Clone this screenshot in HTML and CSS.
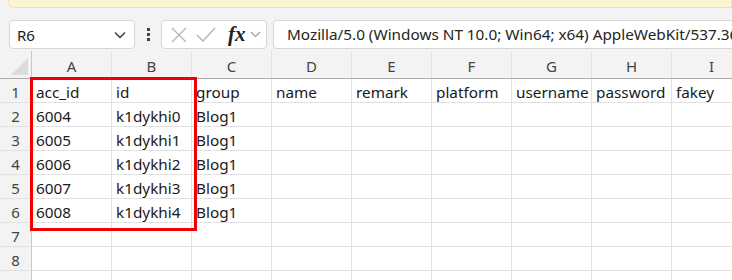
FILE: index.html
```html
<!DOCTYPE html>
<html lang="en">
<head>
  <meta charset="UTF-8">
  <title>Sheet</title>
  <link rel="stylesheet" href="styles.css">
</head>
<body>
  <div class="notice"></div>
  <div class="formula-bar">
    <div class="name-box">
      <span>R6</span>
      <svg class="chev" width="12" height="8" viewBox="0 0 12 8"><path d="M1 1.5 L6 6.5 L11 1.5" fill="none" stroke="#333" stroke-width="1.3"/></svg>
    </div>
    <div class="dots"><i></i><i></i><i></i></div>
    <div class="fx-box">
      <svg width="18" height="18" viewBox="0 0 18 18"><path d="M2 2 L16 16 M16 2 L2 16" stroke="#b4b4b4" stroke-width="1.3"/></svg>
      <svg width="20" height="18" viewBox="0 0 20 18"><path d="M1 9 L7 15 L19 2" fill="none" stroke="#b4b4b4" stroke-width="1.3"/></svg>
      <span class="fx">fx</span>
      <svg width="11" height="7" viewBox="0 0 11 7"><path d="M1 1 L5.5 5.5 L10 1" fill="none" stroke="#9a9a9a" stroke-width="1.2"/></svg>
    </div>
    <div class="content-box">Mozilla/5.0 (Windows NT 10.0; Win64; x64) AppleWebKit/537.36 (KHTML, like Gecko) Chrome/120.0.0.0 Safari/537.36</div>
  </div>

  <div class="sheet">
    <div class="grid">
      <div class="corner">
        <svg width="17" height="17" viewBox="0 0 17 17"><polygon points="17,0 17,17 0,17" fill="#dcdcdc"/></svg>
      </div>
      <div class="col-head">A</div>
      <div class="col-head">B</div>
      <div class="col-head">C</div>
      <div class="col-head">D</div>
      <div class="col-head">E</div>
      <div class="col-head">F</div>
      <div class="col-head">G</div>
      <div class="col-head">H</div>
      <div class="col-head">I</div>

      <div class="row-head">1</div>
      <div class="cell">acc_id</div><div class="cell">id</div><div class="cell">group</div><div class="cell">name</div><div class="cell">remark</div><div class="cell">platform</div><div class="cell">username</div><div class="cell">password</div><div class="cell">fakey</div>
      <div class="row-head">2</div>
      <div class="cell">6004</div><div class="cell">k1dykhi0</div><div class="cell">Blog1</div><div class="cell"></div><div class="cell"></div><div class="cell"></div><div class="cell"></div><div class="cell"></div><div class="cell"></div>
      <div class="row-head">3</div>
      <div class="cell">6005</div><div class="cell">k1dykhi1</div><div class="cell">Blog1</div><div class="cell"></div><div class="cell"></div><div class="cell"></div><div class="cell"></div><div class="cell"></div><div class="cell"></div>
      <div class="row-head">4</div>
      <div class="cell">6006</div><div class="cell">k1dykhi2</div><div class="cell">Blog1</div><div class="cell"></div><div class="cell"></div><div class="cell"></div><div class="cell"></div><div class="cell"></div><div class="cell"></div>
      <div class="row-head">5</div>
      <div class="cell">6007</div><div class="cell">k1dykhi3</div><div class="cell">Blog1</div><div class="cell"></div><div class="cell"></div><div class="cell"></div><div class="cell"></div><div class="cell"></div><div class="cell"></div>
      <div class="row-head">6</div>
      <div class="cell">6008</div><div class="cell">k1dykhi4</div><div class="cell">Blog1</div><div class="cell"></div><div class="cell"></div><div class="cell"></div><div class="cell"></div><div class="cell"></div><div class="cell"></div>
      <div class="row-head">7</div>
      <div class="cell"></div><div class="cell"></div><div class="cell"></div><div class="cell"></div><div class="cell"></div><div class="cell"></div><div class="cell"></div><div class="cell"></div><div class="cell"></div>
      <div class="row-head">8</div>
      <div class="cell"></div><div class="cell"></div><div class="cell"></div><div class="cell"></div><div class="cell"></div><div class="cell"></div><div class="cell"></div><div class="cell"></div><div class="cell"></div>
      <div class="row-head">9</div>
      <div class="cell"></div><div class="cell"></div><div class="cell"></div><div class="cell"></div><div class="cell"></div><div class="cell"></div><div class="cell"></div><div class="cell"></div><div class="cell"></div>
    </div>
    <div class="highlight"></div>
  </div>
</body>
</html>
```

FILE: styles.css
```css
* {
  margin: 0;
  padding: 0;
  box-sizing: border-box;
}
body {
  width: 732px;
  height: 280px;
  overflow: hidden;
  background-color: #f3f3f3;
  font-family: "Noto Sans", "Open Sans", sans-serif;
  color: #1a1a1a;
}
.notice {
  height: 8px;
  margin-left: 8px;
  background-color: #fcf5d2;
  border: 1px solid #eee3b4;
  border-top: none;
  border-radius: 0 0 0 6px;
}
.formula-bar {
  display: flex;
  align-items: center;
  height: 43px;
  padding: 10px 0 0 9px;
}
.name-box {
  display: flex;
  align-items: center;
  justify-content: space-between;
  width: 126px;
  height: 29px;
  padding: 0 8px 0 7px;
  background-color: #fff;
  border: 1px solid #d6d6d6;
  border-radius: 4px;
  font-size: 15px;
}
.dots {
  display: flex;
  flex-direction: column;
  gap: 2px;
  width: 26px;
  align-items: center;
}
.dots i {
  width: 3px;
  height: 3px;
  background-color: #444;
}
.fx-box {
  display: flex;
  align-items: center;
  gap: 8px;
  width: 106px;
  height: 29px;
  padding: 0 5px 0 8px;
  background-color: #fff;
  border: 1px solid #d6d6d6;
  border-radius: 4px;
}
.fx {
  font-family: "Liberation Serif", serif;
  font-style: italic;
  font-weight: bold;
  font-size: 21px;
  line-height: 1;
  color: #222;
  margin-left: 4px;
  margin-right: -4px;
}
.content-box {
  flex: 1;
  height: 29px;
  margin-left: 6px;
  padding: 3px 0 0 13px;
  background-color: #fff;
  border: 1px solid #d6d6d6;
  border-right: none;
  border-radius: 4px 0 0 4px;
  font-size: 15.3px;
  white-space: nowrap;
  overflow: hidden;
  color: #242424;
}
.sheet {
  position: relative;
}
.grid {
  display: grid;
  grid-template-columns: 32px repeat(9, 80px);
  grid-template-rows: 28px repeat(9, 24px);
  width: 752px;
}
.corner {
  display: flex;
  align-items: flex-end;
  justify-content: flex-end;
  padding: 0 3px 3px 0;
  border-right: 1px solid #c8c8c8;
  border-bottom: 1px solid #ababab;
}
.col-head {
  display: flex;
  align-items: center;
  justify-content: center;
  padding-top: 3px;
  font-size: 15px;
  color: #444;
  border-right: 1px solid #e2e2e2;
  border-bottom: 1px solid #ababab;
}
.row-head {
  display: flex;
  align-items: center;
  justify-content: center;
  padding-top: 3px;
  font-size: 15px;
  color: #444;
  border-right: 1px solid #c8c8c8;
  border-bottom: 1px solid #e2e2e2;
}
.cell {
  background-color: #fff;
  border-right: 1px solid #e1e1e1;
  border-bottom: 1px solid #e1e1e1;
  padding: 3px 0 0 4px;
  font-size: 15.3px;
  line-height: 21px;
  white-space: nowrap;
  overflow: hidden;
}
.highlight {
  position: absolute;
  left: 30px;
  top: 26px;
  width: 167px;
  height: 154px;
  border: 3px solid #f20000;
}
```
